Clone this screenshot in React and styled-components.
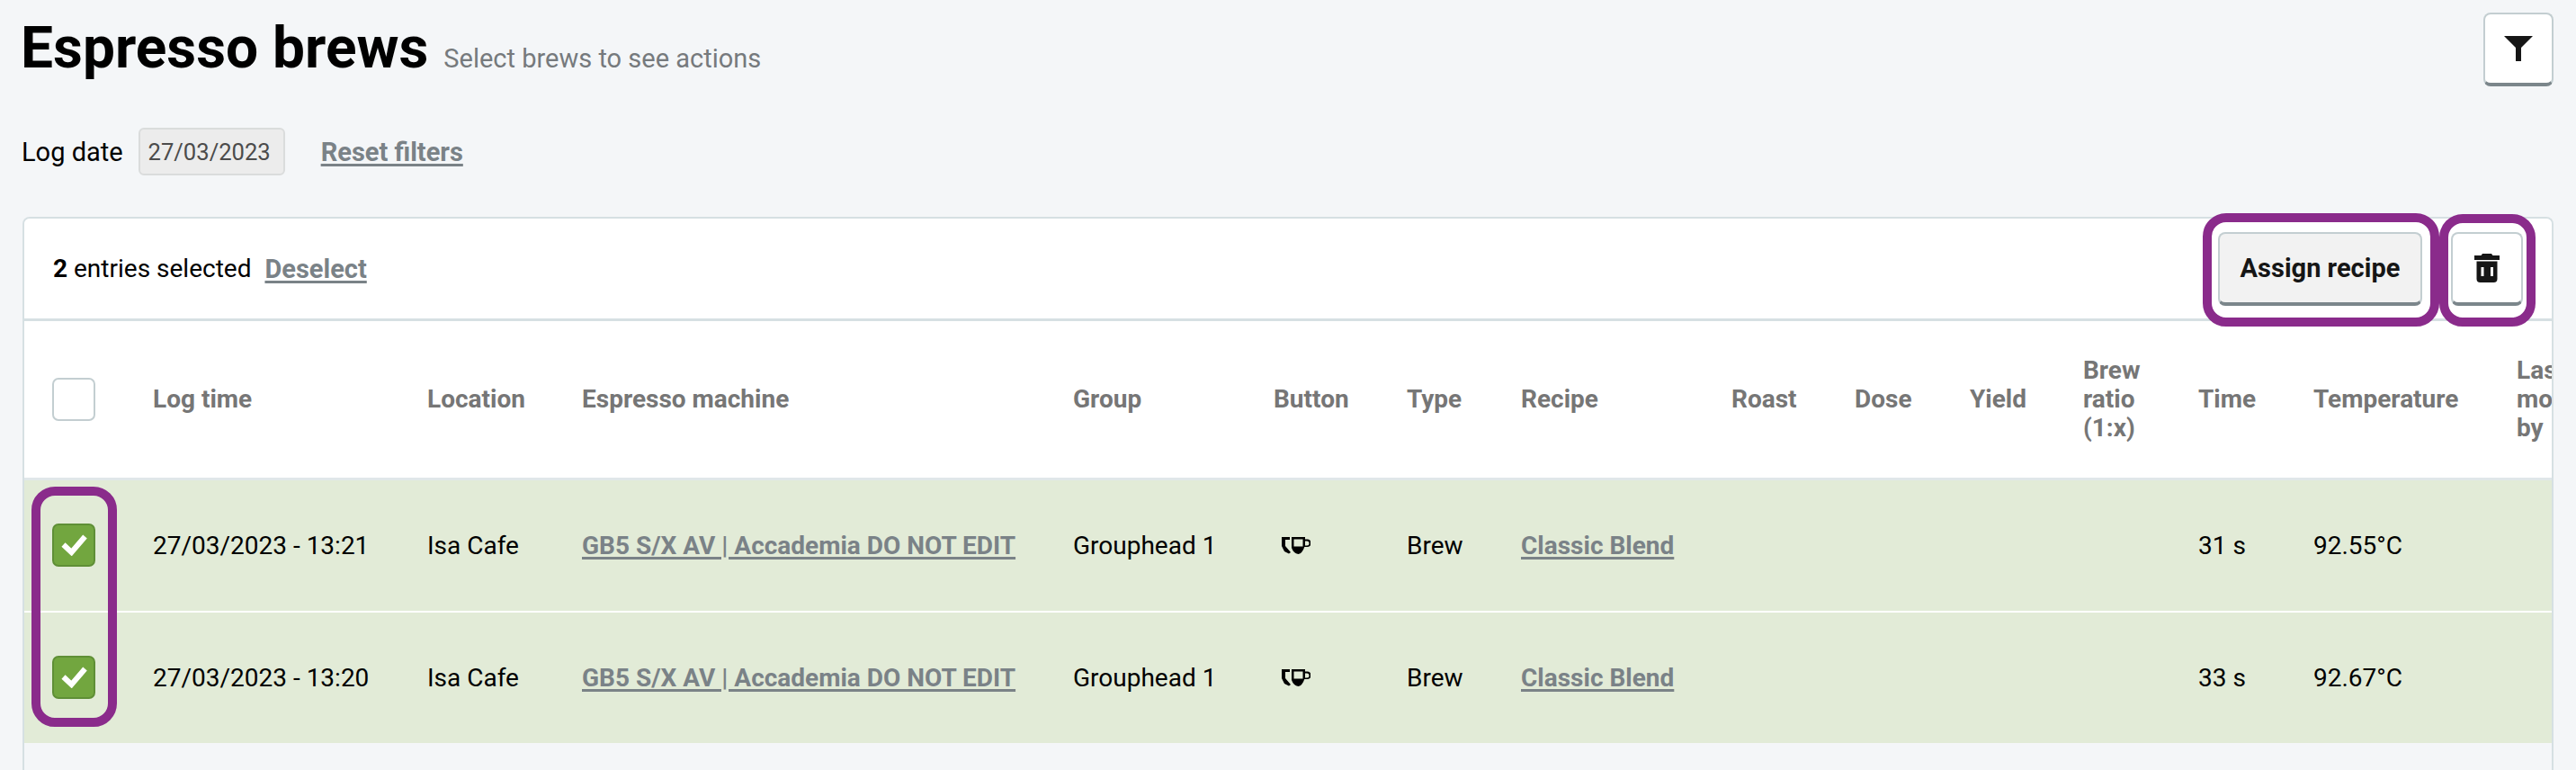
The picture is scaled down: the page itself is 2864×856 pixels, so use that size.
import React from 'react'
import styled, { createGlobalStyle } from 'styled-components'

const GlobalStyle = createGlobalStyle`
  html, body {
    margin: 0;
    background: #f4f6f8;
  }
  body {
    font-family: Roboto, "Liberation Sans", sans-serif;
    color: #000;
    -webkit-font-smoothing: antialiased;
  }
`

const Page = styled.div`
  box-sizing: border-box;
  height: 856px;
  padding: 14px 25px 0;
  display: flex;
  flex-direction: column;
  overflow: hidden;
`

const Header = styled.header`
  display: flex;
  justify-content: space-between;
  align-items: flex-start;
`

const TitleGroup = styled.div`
  display: flex;
  align-items: baseline;
  gap: 17px;
  margin-left: -2px;
`

const Title = styled.h1`
  margin: 0;
  font-size: 64px;
  line-height: 80px;
  font-weight: 700;
`

const Hint = styled.span`
  font-size: 29px;
  color: #767a7d;
`

const Button = styled.button`
  box-sizing: border-box;
  display: flex;
  align-items: center;
  justify-content: center;
  height: 82px;
  width: ${p => p.$width}px;
  padding: 0;
  background: ${p => p.$bg || '#fff'};
  border: 2px solid #c3ced1;
  border-bottom: 4px solid #7b868b;
  border-radius: 8px;
  font-family: inherit;
  font-size: 29px;
  font-weight: 700;
  color: #161616;
`

const Filters = styled.div`
  display: flex;
  align-items: center;
  margin: 46px 0 0 -1px;
  height: 53px;
  font-size: 29px;
`

const DateBox = styled.div`
  box-sizing: border-box;
  display: flex;
  align-items: center;
  justify-content: center;
  width: 163px;
  height: 53px;
  margin: 0 40px 0 17px;
  padding-right: 5px;
  background: #ececec;
  border: 2px solid #dadcdc;
  border-radius: 6px;
  font-size: 25.600px;
  color: #4b4b4b;
`

const TextLink = styled.a`
  font-size: ${p => p.$size || 29}px;
  font-weight: 700;
  color: #7a8287;
  text-decoration: underline;
  text-decoration-thickness: 3px;
  text-underline-offset: 3px;
`

const Card = styled.section`
  flex: 1;
  margin-top: 46px;
  border: solid #d6e0e3;
  border-width: 2px 2px 0;
  border-radius: 8px 8px 0 0;
`

const Toolbar = styled.div`
  box-sizing: border-box;
  height: 111px;
  display: flex;
  align-items: center;
  justify-content: space-between;
  padding: 0 32px;
  background: #fff;
  border-radius: 6px 6px 0 0;
  font-size: 28px;
`

const Selection = styled.div`
  display: flex;
  align-items: center;
  gap: 15px;
  b {
    font-weight: 700;
  }
`

const Actions = styled.div`
  display: flex;
  gap: 32px;
`

const Marked = styled.div`
  position: relative;
  z-index: 1;
`

const Ring = styled.span`
  position: absolute;
  top: ${p => p.$top}px;
  bottom: ${p => p.$bottom}px;
  left: ${p => p.$left}px;
  right: ${p => p.$right}px;
  border: 10px solid #8a2b8b;
  border-radius: 26px;
  pointer-events: none;
`

const CheckRing = styled(Ring)`
  box-sizing: border-box;
  width: 95px;
  height: 267px;
`

const TableArea = styled.div`
  position: relative;
  overflow: hidden;
`

const Table = styled.table`
  table-layout: fixed;
  width: 2870px;
  border-collapse: collapse;
  font-size: 28px;
`

const HeadRow = styled.tr`
  height: 177px;
  background: #fff;
  border-top: 3px solid #d6e0e3;
  border-bottom: 3px solid #e0e7e9;
`

const HeadCell = styled.th`
  padding: 0;
  text-align: left;
  font-weight: 700;
  line-height: 32px;
  color: #767676;
`

const Row = styled.tr`
  height: 147px;
  background: #e2ebd7;
  & + & {
    height: 146px;
    border-top: 2px solid #fff;
  }
`

const Cell = styled.td`
  padding: 0;
  white-space: nowrap;
`

const Box = styled.span`
  box-sizing: border-box;
  display: flex;
  align-items: center;
  justify-content: center;
  width: 48px;
  height: 48px;
  margin-left: 31px;
  border: 2px solid ${p => (p.$checked ? '#5f8f36' : '#c3ced1')};
  border-radius: 7px;
  background: ${p => (p.$checked ? '#72a63f' : '#fff')};
`

const CupSvg = styled.svg`
  display: block;
  margin-left: 9px;
`

const FilterIcon = () => (
  <svg width="32" height="28" viewBox="0 0 32 28">
    <path fill="#161616" d="M0 0h32L19 13v15h-6V13z" />
  </svg>
)

const TrashIcon = () => (
  <svg width="28" height="32" viewBox="0 0 28 32">
    <path fill="#161616" fillRule="evenodd" d="M7.500 2L9 0h10l1.500 2H28v5H0V2zM2.500 8.500h23V28a4 4 0 0 1-4 4H6.500a4 4 0 0 1-4-4zM7.500 15v10h3V15zm10.500 0v10h3V15z" />
  </svg>
)

const CheckIcon = () => (
  <svg width="29" height="24" viewBox="0 0 29 24">
    <path fill="none" stroke="#fff" strokeWidth="6" d="M2.500 11.500l9 8.500L26.500 2.500" />
  </svg>
)

const CupIcon = () => (
  <CupSvg width="32" height="20" viewBox="0 0 32 20">
    <path fill="#000" fillRule="evenodd" d="M0 1h9v3H4v7l6 7-2 1.500-5-2.500-3-6zM11 1h15v2.500h2.500a3.500 3.500 0 0 1 0 8.500h-3.200Q23 19 18.500 20 13 19 11 13zM13.500 3.500v8h10v-8zM26 5.500v5h2a2.500 2.500 0 0 0 0-5z" />
  </CupSvg>
)

const columns = [
  { width: 143 },
  { title: 'Log time', width: 305 },
  { title: 'Location', width: 172 },
  { title: 'Espresso machine', width: 546 },
  { title: 'Group', width: 223 },
  { title: 'Button', width: 148 },
  { title: 'Type', width: 127 },
  { title: 'Recipe', width: 234 },
  { title: 'Roast', width: 137 },
  { title: 'Dose', width: 128 },
  { title: 'Yield', width: 126 },
  { title: <>Brew<br />ratio<br />(1:x)</>, width: 128 },
  { title: 'Time', width: 128 },
  { title: 'Temperature', width: 226 },
  { title: <>Last<br />modified<br />by</>, width: 200 }
]

const brews = [
  { at: '27/03/2023 - 13:21', time: '31 s', temperature: '92.55°C' },
  { at: '27/03/2023 - 13:20', time: '33 s', temperature: '92.67°C' }
]

const App = () => (
  <Page>
    <GlobalStyle />
    <Header>
      <TitleGroup>
        <Title>Espresso brews</Title>
        <Hint>Select brews to see actions</Hint>
      </TitleGroup>
      <Button $width={78} aria-label="Filter"><FilterIcon /></Button>
    </Header>
    <Filters>
      Log date
      <DateBox>27/03/2023</DateBox>
      <TextLink>Reset filters</TextLink>
    </Filters>
    <Card>
      <Toolbar>
        <Selection>
          <span><b>2</b> entries selected</span>
          <TextLink>Deselect</TextLink>
        </Selection>
        <Actions>
          <Marked>
            <Button $width={227} $bg="#f2f2f2">Assign recipe</Button>
            <Ring $top={-21} $bottom={-23} $left={-17} $right={-19} />
          </Marked>
          <Marked>
            <Button $width={80} aria-label="Delete"><TrashIcon /></Button>
            <Ring $top={-20} $bottom={-23} $left={-13} $right={-14} />
          </Marked>
        </Actions>
      </Toolbar>
      <TableArea>
        <Table>
          <colgroup>
            {columns.map((col, i) => <col key={i} width={col.width} />)}
          </colgroup>
          <thead>
            <HeadRow>
              <HeadCell><Box /></HeadCell>
              {columns.slice(1).map((col, i) => <HeadCell key={i}>{col.title}</HeadCell>)}
            </HeadRow>
          </thead>
          <tbody>
            {brews.map(brew => (
              <Row key={brew.at}>
                <Cell><Box $checked><CheckIcon /></Box></Cell>
                <Cell>{brew.at}</Cell>
                <Cell>Isa Cafe</Cell>
                <Cell><TextLink $size={28}>GB5 S/X AV | Accademia DO NOT EDIT</TextLink></Cell>
                <Cell>Grouphead 1</Cell>
                <Cell><CupIcon /></Cell>
                <Cell>Brew</Cell>
                <Cell><TextLink $size={28}>Classic Blend</TextLink></Cell>
                <Cell />
                <Cell />
                <Cell />
                <Cell />
                <Cell>{brew.time}</Cell>
                <Cell>{brew.temperature}</Cell>
                <Cell />
              </Row>
            ))}
          </tbody>
        </Table>
        <CheckRing $top={187} $left={8} />
      </TableArea>
    </Card>
  </Page>
)

export default App
